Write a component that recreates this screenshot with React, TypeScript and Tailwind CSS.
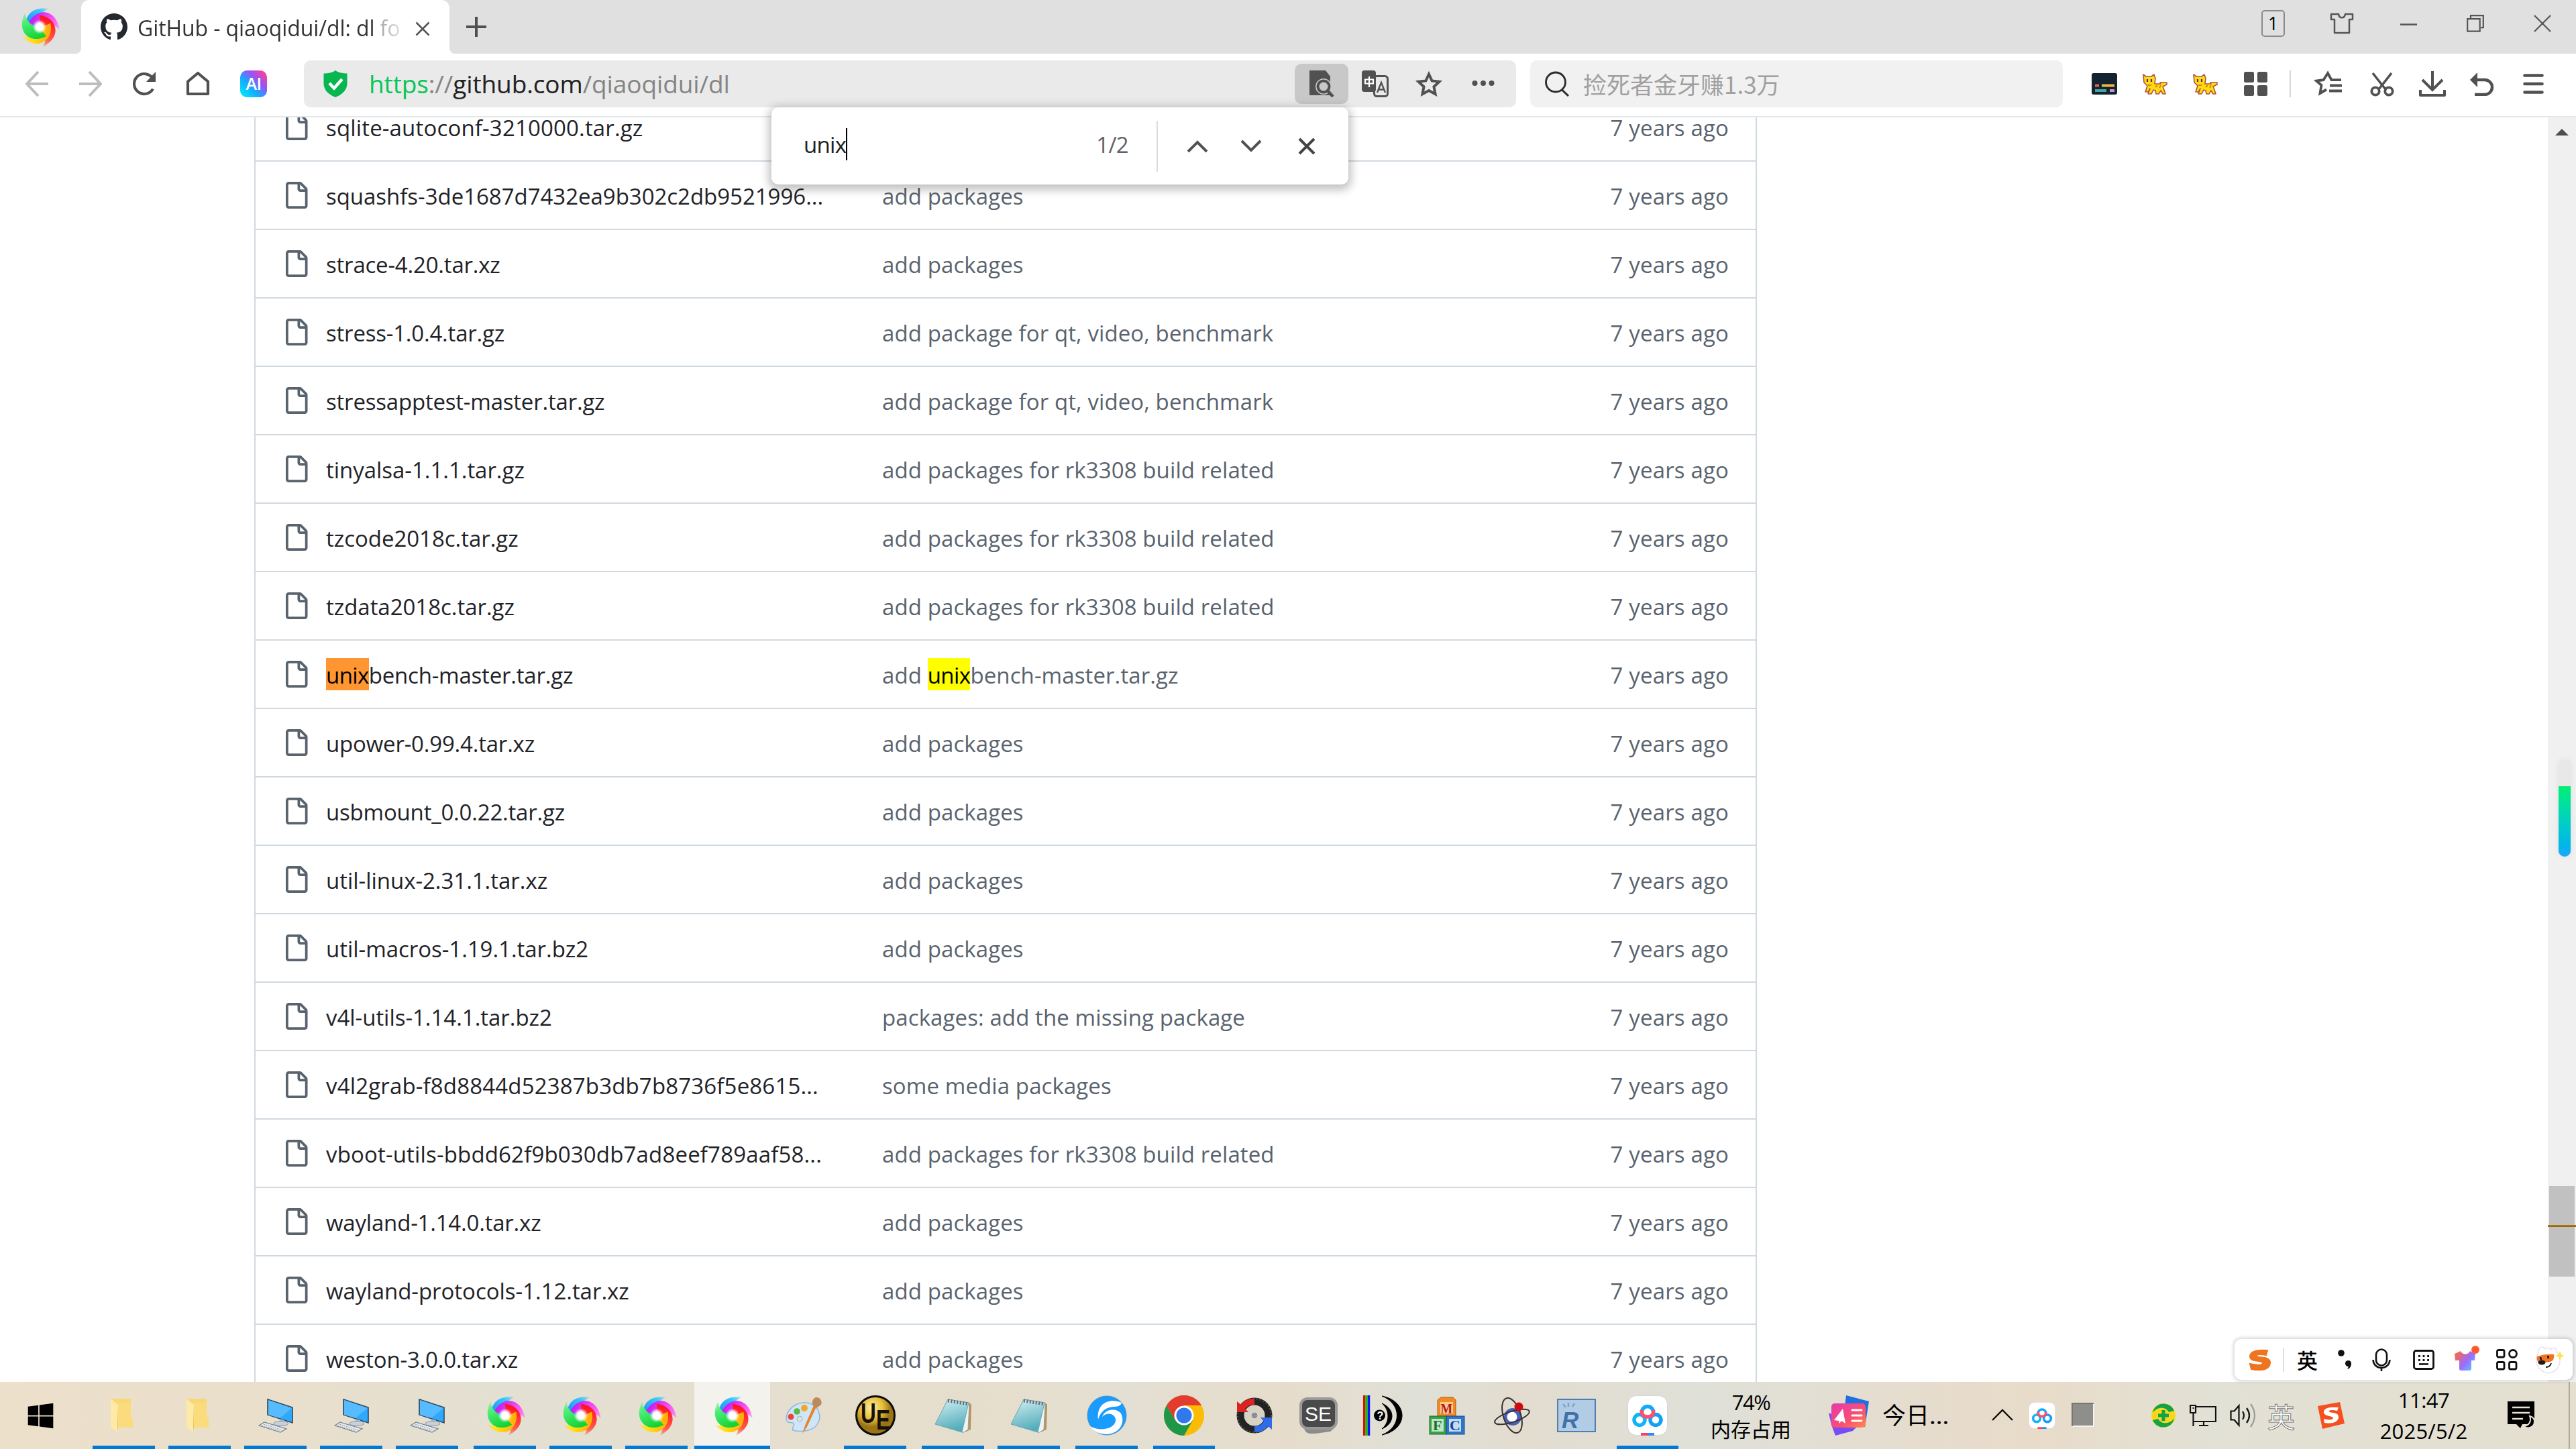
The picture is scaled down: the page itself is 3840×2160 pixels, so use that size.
import type { ReactNode } from "react"
import { FaWindows } from "react-icons/fa"

interface FileRow {
  name: string
  message: string
  tracking?: string
}

interface IconProps {
  w: number
  h: number
  className?: string
  children?: ReactNode
}

const MATCH = "unix"

const TIGHT = "tracking-[-0.2px]"
const LOOSE = "tracking-[0.16px]"

const files: FileRow[] = [
  { name: "sqlite-autoconf-3210000.tar.gz", message: "add packages", tracking: LOOSE },
  { name: "squashfs-3de1687d7432ea9b302c2db9521996...", message: "add packages" },
  { name: "strace-4.20.tar.xz", message: "add packages", tracking: TIGHT },
  { name: "stress-1.0.4.tar.gz", message: "add package for qt, video, benchmark", tracking: TIGHT },
  { name: "stressapptest-master.tar.gz", message: "add package for qt, video, benchmark", tracking: TIGHT },
  { name: "tinyalsa-1.1.1.tar.gz", message: "add packages for rk3308 build related" },
  { name: "tzcode2018c.tar.gz", message: "add packages for rk3308 build related" },
  { name: "tzdata2018c.tar.gz", message: "add packages for rk3308 build related" },
  { name: "unixbench-master.tar.gz", message: "add unixbench-master.tar.gz", tracking: TIGHT },
  { name: "upower-0.99.4.tar.xz", message: "add packages", tracking: TIGHT },
  { name: "usbmount_0.0.22.tar.gz", message: "add packages", tracking: TIGHT },
  { name: "util-linux-2.31.1.tar.xz", message: "add packages" },
  { name: "util-macros-1.19.1.tar.bz2", message: "add packages" },
  { name: "v4l-utils-1.14.1.tar.bz2", message: "packages: add the missing package" },
  { name: "v4l2grab-f8d8844d52387b3db7b8736f5e8615...", message: "some media packages", tracking: LOOSE },
  { name: "vboot-utils-bbdd62f9b030db7ad8eef789aaf58...", message: "add packages for rk3308 build related", tracking: LOOSE },
  { name: "wayland-1.14.0.tar.xz", message: "add packages", tracking: TIGHT },
  { name: "wayland-protocols-1.12.tar.xz", message: "add packages" },
  { name: "weston-3.0.0.tar.xz", message: "add packages", tracking: TIGHT },
]

// viewBox always equals the drawn size, so paths are in page pixels
function Icon({ w, h, className = "", children }: IconProps) {
  return (
    <svg width={w} height={h} viewBox={`0 0 ${w} ${h}`} fill="none" className={`shrink-0 ${className}`}>
      {children}
    </svg>
  )
}

/* ---------- logos ---------- */

function SwirlLogo({ size = 60 }: { size?: number }) {
  const arm = "M20 44C1 27 10 -2 43 3C33 8 27 17 28 30Z"
  const arms = [
    { id: "blue", from: "#1477f5", to: "#35c8ff", turn: 0 },
    { id: "magenta", from: "#b80df0", to: "#ff62ee", turn: 72 },
    { id: "red", from: "#ff0018", to: "#ff5a48", turn: 144 },
    { id: "yellow", from: "#ff9d00", to: "#ffe11a", turn: 216 },
    { id: "green", from: "#00c81e", to: "#4ff07a", turn: 288 },
  ]
  return (
    <svg width={size} height={size} viewBox="0 0 60 60" className="shrink-0">
      <defs>
        {arms.map((a) => (
          <linearGradient key={a.id} id={`sw-${a.id}`} x1="0" y1="1" x2="1" y2="0">
            <stop offset="0" stopColor={a.from} />
            <stop offset="0.75" stopColor={a.to} />
            <stop offset="1" stopColor={a.to} stopOpacity="0.35" />
          </linearGradient>
        ))}
        <radialGradient id="sw-core">
          <stop offset="0.5" stopColor="#fff" />
          <stop offset="1" stopColor="#fff" stopOpacity="0" />
        </radialGradient>
      </defs>
      {arms.map((a) => (
        <path key={a.id} d={arm} fill={`url(#sw-${a.id})`} transform={`rotate(${a.turn} 30 30)`} />
      ))}
      <circle cx="30" cy="30" r="10.500" fill="url(#sw-core)" />
    </svg>
  )
}

function GithubMark() {
  return (
    <svg width="40" height="40" viewBox="0 0 16 16" fill="#24292f" className="shrink-0">
      <path d="M8 0C3.58 0 0 3.58 0 8c0 3.54 2.29 6.53 5.47 7.59.4.07.55-.17.55-.38 0-.19-.01-.82-.01-1.49-2.01.37-2.53-.49-2.69-.94-.09-.23-.48-.94-.82-1.13-.28-.15-.68-.52-.01-.53.63-.01 1.08.58 1.23.82.72 1.21 1.87.87 2.33.66.07-.52.28-.87.51-1.07-1.78-.2-3.64-.89-3.64-3.95 0-.87.31-1.59.82-2.15-.08-.2-.36-1.02.08-2.12 0 0 .67-.21 2.2.82.64-.18 1.32-.27 2-.27s1.36.09 2 .27c1.53-1.04 2.2-.82 2.2-.82.44 1.1.16 1.92.08 2.12.51.56.82 1.27.82 2.15 0 3.07-1.87 3.75-3.65 3.95.29.25.54.73.54 1.48 0 1.07-.01 1.93-.01 2.2 0 .21.15.46.55.38A8.01 8.01 0 0 0 16 8c0-4.42-3.58-8-8-8Z" />
    </svg>
  )
}

function FileIcon() {
  return (
    <svg width="40" height="40" viewBox="0 0 16 16" fill="#59636e" className="shrink-0">
      <path d="M2 1.75C2 .784 2.784 0 3.75 0h6.586c.464 0 .909.184 1.237.513l2.914 2.914c.329.328.513.773.513 1.237v9.586A1.75 1.75 0 0 1 13.25 16h-9.5A1.75 1.75 0 0 1 2 14.25Zm1.75-.25a.25.25 0 0 0-.25.25v12.5c0 .138.112.25.25.25h9.5a.25.25 0 0 0 .25-.25V6h-2.75A1.75 1.75 0 0 1 9 4.25V1.5Zm6.75.062V4.25c0 .138.112.25.25.25h2.688l-.011-.013-2.914-2.914-.013-.011Z" />
    </svg>
  )
}

function BaiduDisk({ size }: { size: number }) {
  return (
    <svg width={size} height={size} viewBox="0 0 60 60" fill="none" className="shrink-0">
      <rect x="0.5" y="0.5" width="59" height="59" rx="13" fill="#fff" stroke="#d5d5d5" />
      <circle cx="18" cy="36.500" r="8" stroke="#12b4f8" strokeWidth="5.500" />
      <circle cx="42" cy="36.500" r="8" stroke="#12a0fa" strokeWidth="5.500" />
      <path d="M21.500 25a8.500 8.500 0 1 1 17 0" stroke="#12aafa" strokeWidth="5.500" />
      <path d="M21.500 22c-1 7 3 10 8.500 10s9.500-3 8.500-10" stroke="#ff4f6b" strokeWidth="5.500" />
      <path d="M20 56h10v4H20z" fill="#ff3f5d" />
      <path d="M30 56h10v4H30z" fill="#2f86ff" />
    </svg>
  )
}

/* ---------- title bar ---------- */

function TitleBar() {
  return (
    <div className="flex h-[80px] w-full shrink-0 bg-white">
      <div className="flex w-[121px] items-center rounded-br-lg bg-[#e0e0e0] pl-[29px]">
        <SwirlLogo />
      </div>
      <div className="w-[549px] bg-[#e0e0e0]">
        <div className="flex h-full items-center rounded-t-xl bg-white pl-[29px]">
          <GithubMark />
          <div className="ml-[15px] w-[392px] overflow-hidden bg-[linear-gradient(90deg,#333_91%,#a8a8a8_92.500%,#e0e0e0_100%)] bg-clip-text pt-[4px] text-[32px] tracking-[-0.1px] whitespace-nowrap text-transparent">
            GitHub - qiaoqidui/dl: dl fo
          </div>
          <Icon w={22} h={22} className="mt-[6px] ml-[22px]">
            <path d="M1.500 1.500l19 19M20.500 1.500l-19 19" stroke="#555" strokeWidth="2.500" />
          </Icon>
        </div>
      </div>
      <div className="flex flex-1 items-start rounded-bl-lg bg-[#e0e0e0]">
        <Icon w={30} h={30} className="mt-[25px] ml-[25px]">
          <path d="M15 0v30M0 15h30" stroke="#4f4f4f" strokeWidth="4" />
        </Icon>
        <div className="mt-[15px] ml-auto flex h-[40px] w-[35px] items-center justify-center rounded-[5px] border-2 border-[#8a8a8a] text-[27px] text-black">
          1
        </div>
        <Icon w={36} h={32} className="mt-[19px] ml-[67px]">
          <path d="M2 2h11c1 7 9 7 10 0h11v8h-5v20H7V10H2z" stroke="#555" strokeWidth="2.500" strokeLinejoin="round" />
        </Icon>
        <Icon w={25} h={3} className="mt-[35px] ml-[69px]">
          <path d="M0 1.500h25" stroke="#555" strokeWidth="2.500" />
        </Icon>
        <Icon w={26} h={26} className="mt-[22px] ml-[74px]">
          <path d="M1.200 6.200h18.500v18.500H1.200zM6 5V1.200h18.800v18H21" stroke="#555" strokeWidth="2.200" />
        </Icon>
        <Icon w={26} h={26} className="mt-[22px] mr-[37px] ml-[74px]">
          <path d="M1 1l24 24M25 1L1 25" stroke="#555" strokeWidth="2.200" />
        </Icon>
      </div>
    </div>
  )
}

/* ---------- toolbar ---------- */

function CatIcon({ className = "" }: { className?: string }) {
  return (
    <Icon w={38} h={32} className={className}>
      <path
        d="M2 2l4 3h8l4-3 2 6-1 8h9l-1-2h10v3l-6 3 2 5 2 6h-4l-3-5-3 5h-4l-1-5-3-1-3 6h-5l3-8-3 5H5l3-9-5-5z"
        fill="#ffdc10"
        stroke="#b0563f"
        strokeWidth="1.600"
        strokeLinejoin="round"
      />
      <path d="M8 9v4M14 9v4" stroke="#5c2c7a" strokeWidth="2.200" />
      <path d="M9 17c2 2 3 2 5 0M20 21l3-3M26 22l2-4" stroke="#e07b1b" strokeWidth="1.800" />
    </Icon>
  )
}

function Toolbar() {
  return (
    <div className="flex h-[95px] w-full shrink-0 items-center border-b-2 border-[#e2e7ec] bg-white pb-[3px]">
      <Icon w={34} h={38} className="ml-[38px]">
        <path d="M19 1L2 19l17 18M2 19h32" stroke="#bdbdbd" strokeWidth="4" />
      </Icon>
      <Icon w={34} h={38} className="ml-[46px]">
        <path d="M15 1l17 18-17 18M32 19H0" stroke="#bdbdbd" strokeWidth="4" />
      </Icon>
      <Icon w={36} h={38} className="ml-[45px]">
        <path d="M31 26.500A15 15 0 1 1 30 10" stroke="#515151" strokeWidth="4.200" />
        <path d="M35 1v15H21z" fill="#515151" />
      </Icon>
      <Icon w={36} h={38} className="ml-[44px]">
        <path d="M3 15.500L18 3l15 12.500V34H3z" stroke="#515151" strokeWidth="4.200" strokeLinejoin="round" />
      </Icon>
      <div className="ml-[45px] flex size-[40px] items-center justify-center rounded-[10px] bg-[linear-gradient(45deg,#00e5ff_8%,#1aa7ff_40%,#9a52f5_65%,#ff4196_92%)] text-[25px] font-semibold tracking-[-0.5px] text-white">
        AI
      </div>

      {/* Address bar */}
      <div className="ml-[55px] flex h-[70px] w-[1807px] items-center rounded-[10px] bg-[#eaeaea] pl-[29px]">
        <Icon w={36} h={40}>
          <path d="M18 0c5 3.500 11 4.500 17.500 4.500V19c0 11-8 17-17.500 21C8.500 36 .5 30 .5 19V4.500C7 4.500 13 3.500 18 0z" fill="#06b64f" />
          <path d="M9 19l7 7.500L28 13" stroke="#fff" strokeWidth="4.500" />
        </Icon>
        <div className="ml-[32px] text-[37px] tracking-[-0.12px] whitespace-nowrap text-[#858585]">
          <span className="text-[#06c755]">https</span>://<span className="text-[#222]">github.com</span>/qiaoqidui/dl
        </div>
        <div className="ml-auto flex h-[60px] w-[80px] items-center justify-center rounded-[10px] bg-[#c8c8c8]">
          <Icon w={38} h={40}>
            <path d="M1 0h24l7 9v28H1z" fill="#515151" />
            <circle cx="22" cy="24" r="9" fill="#c8c8c8" stroke="#c8c8c8" strokeWidth="6" />
            <circle cx="22" cy="24" r="8.500" stroke="#515151" strokeWidth="4" />
            <path d="M28 30l8 9" stroke="#515151" strokeWidth="4.500" />
          </Icon>
        </div>
        <Icon w={40} h={40} className="ml-5">
          <rect x="18.500" y="8.500" width="20" height="30" rx="4" fill="#eaeaea" stroke="#515151" strokeWidth="3" />
          <rect x="0" y="0" width="21" height="32" rx="4" fill="#515151" />
          <path d="M5 13.500h12v6H5zM11 9v16" stroke="#fff" strokeWidth="2.200" />
          <path d="M23 33l6-15 6 15M25 28.500h8" stroke="#515151" strokeWidth="2.400" />
        </Icon>
        <Icon w={40} h={40} className="ml-10">
          <path d="M20 5.500l4.600 10 10.900 1.300-8 7.500 2.100 11L20 30l-9.600 5.300 2.100-11-8-7.500 10.900-1.300z" stroke="#515151" strokeWidth="4" />
        </Icon>
        <Icon w={34} h={10} className="mr-8 ml-[44px]">
          <circle cx="4.500" cy="4" r="4" fill="#515151" />
          <circle cx="17" cy="4" r="4" fill="#515151" />
          <circle cx="29.500" cy="4" r="4" fill="#515151" />
        </Icon>
      </div>

      {/* Search box */}
      <div className="ml-[21px] flex h-[70px] w-[794px] items-center rounded-[10px] bg-[#f1f1f1] pl-[22px]">
        <Icon w={37} h={38}>
          <circle cx="16" cy="16.500" r="14.500" stroke="#2b2b2b" strokeWidth="2.800" />
          <path d="M25.500 28l9.500 9" stroke="#2b2b2b" strokeWidth="3" />
        </Icon>
        <div className="ml-[20px] font-['Noto_Sans_CJK_SC',sans-serif] text-[35px] text-[#a0a0a0]">捡死者金牙赚1.3万</div>
      </div>

      <Icon w={38} h={32} className="ml-[43px]">
        <rect width="38" height="32" rx="3" fill="#13232f" />
        <path d="M5 18.500h6" stroke="#e85a5a" strokeWidth="4" />
        <path d="M15 18.500h19" stroke="#f0b83c" strokeWidth="4" />
        <path d="M5 26h17" stroke="#45a5a5" strokeWidth="4" />
        <path d="M27 26h7" stroke="#c98fd6" strokeWidth="4" />
      </Icon>
      <CatIcon className="ml-[37px]" />
      <CatIcon className="ml-[37px]" />
      <Icon w={35} h={36} className="ml-[39px]">
        <rect width="15" height="16" rx="2.500" fill="#515151" />
        <rect x="20" width="15" height="16" rx="2.500" fill="#515151" />
        <rect y="20" width="15" height="16" rx="2.500" fill="#515151" />
        <rect x="20" y="20" width="15" height="16" rx="2.500" fill="#515151" />
      </Icon>
      <div className="ml-[33px] h-[40px] w-[2px] bg-[#d6d6d6]" />
      <Icon w={42} h={40} className="ml-[35px]">
        <path d="M18 28.500L8.500 34l2-12L3 15.500l10.500-1.300L20 4l5.500 10.200H40" stroke="#515151" strokeWidth="3.800" />
        <path d="M23 22.500h18M22 30.500h19" stroke="#515151" strokeWidth="3.800" />
      </Icon>
      <Icon w={36} h={38} className="ml-[41px]">
        <path d="M4 3l19 24M32 3L13 27" stroke="#515151" strokeWidth="3.600" />
        <circle cx="8" cy="30" r="5.700" stroke="#515151" strokeWidth="3.800" />
        <circle cx="28" cy="30" r="5.700" stroke="#515151" strokeWidth="3.800" />
      </Icon>
      <Icon w={40} h={38} className="ml-[37px]">
        <path d="M20 0v28M5 13l15 15 15-15" stroke="#515151" strokeWidth="4" />
        <path d="M2 28v8h36v-8" stroke="#515151" strokeWidth="4" strokeLinejoin="round" />
      </Icon>
      <Icon w={38} h={36} className="ml-[36px]">
        <path d="M0 12L11 1v22z" fill="#515151" />
        <path d="M9 12h13a11 11 0 0 1 0 22H7" stroke="#515151" strokeWidth="4.400" />
      </Icon>
      <Icon w={32} h={32} className="ml-[41px]">
        <path d="M2.500 3.500h26M2.500 16h26M2.500 28.500h26" stroke="#515151" strokeWidth="4.600" strokeLinecap="round" />
      </Icon>
    </div>
  )
}

function FindBar() {
  return (
    <div className="absolute top-[160px] left-[1150px] flex h-[115px] w-[860px] items-center rounded-[10px] bg-white shadow-[0_4px_14px_4px_rgba(0,0,0,0.25)]">
      <div className="-mt-[3px] ml-[48px] text-[33px] tracking-[-0.7px] text-[#202124]">unix</div>
      <div className="-mt-[6px] h-[48px] w-[2px] bg-black" />
      <div className="-mt-[3px] mr-[42px] ml-auto text-[33px] tracking-[-0.7px] text-[#5f6368]">1/2</div>
      <div className="h-[76px] w-[2px] bg-[#dadce0]" />
      <Icon w={32} h={20} className="ml-[43px]">
        <path d="M2 18L16 4l14 14" stroke="#515151" strokeWidth="4" />
      </Icon>
      <Icon w={32} h={20} className="ml-[48px]">
        <path d="M2 2l14 14L30 2" stroke="#515151" strokeWidth="4" />
      </Icon>
      <Icon w={26} h={26} className="mr-[49px] ml-[54px]">
        <path d="M2 2l22 22M24 2L2 24" stroke="#444" strokeWidth="4" />
      </Icon>
    </div>
  )
}

/* ---------- page ---------- */

function Highlight({ text, active }: { text: string; active?: boolean }) {
  const at = text.indexOf(MATCH)
  if (at < 0) return <>{text}</>
  return (
    <>
      {text.slice(0, at)}
      <span className={`pt-[3px] tracking-[-0.6px] text-black ${active ? "bg-[#ff9632]" : "bg-[#ffff00]"}`}>{MATCH}</span>
      {text.slice(at + MATCH.length)}
    </>
  )
}

function FileTable() {
  return (
    <div className="ml-[379px] w-[2240px] overflow-hidden border-x-2 border-[#d1d9e0]">
      <div className="-mt-[36px]">
        {files.map((file) => (
          <div
            key={file.name}
            className="flex h-[102px] items-center border-b-2 border-[#d1d9e0] pr-[40px] pl-[40px] text-[33px] whitespace-nowrap text-[#59636e]"
          >
            <FileIcon />
            <div className={`ml-[25px] w-[829px] pt-[4px] text-[#1f2328] ${file.tracking ?? "tracking-[-0.03px]"}`}>
              <Highlight text={file.name} active />
            </div>
            <div className="flex-1 pt-[4px] tracking-[0.1px]">
              <Highlight text={file.message} />
            </div>
            <div className="pt-[4px] tracking-[0.15px]">7 years ago</div>
          </div>
        ))}
      </div>
    </div>
  )
}

function ScrollBar() {
  return (
    <div className="relative ml-auto w-[42px] bg-[#f0f0f0]">
      <Icon w={20} h={10} className="mt-[17px] ml-[11px]">
        <path d="M0 10L10 0l10 10z" fill="#4f4f4f" />
      </Icon>
      <div className="absolute top-[1593px] left-[2px] h-[135px] w-[38px] bg-[#c1c1c1]" />
      <div className="absolute top-[1651px] left-0 h-[3px] w-full border-y border-[#8a5a10] bg-[#f0a800]" />
      {/* Memory gauge */}
      <div className="absolute top-[957px] left-[16px] h-[145px] w-[18px] overflow-hidden rounded-full bg-[#e8e8e8] shadow-[0_0_8px_rgba(0,0,0,0.08)]">
        <div className="mt-[40px] h-[105px] bg-gradient-to-b from-[#05f070] to-[#19a8fb]" />
      </div>
    </div>
  )
}

/* ---------- input method bar ---------- */

function ImeBar() {
  return (
    <div className="absolute top-[1996px] left-[3331px] flex h-[61px] w-[504px] items-center rounded-[10px] bg-white shadow-[0_0_5px_2px_rgba(0,0,0,0.16)]">
      <Icon w={36} h={32} className="ml-[18px]">
        <path d="M31 2C20 1 5 2 5 11c0 9 19 5 19 10 0 4-10 3-19 1l2 8c14 3 28 1 28-10 0-10-20-6-20-10 0-3 8-2 14-1z" fill="#ee7420" stroke="#ee7420" strokeWidth="2" />
      </Icon>
      <div className="ml-[19px] h-[36px] w-px bg-[#bbb]" />
      <div className="ml-[19px] font-['Noto_Sans_CJK_SC',sans-serif] text-[31px] leading-[40px] font-medium text-black">英</div>
      <Icon w={22} h={30} className="ml-[30px]">
        <circle cx="5" cy="5" r="4.800" fill="#111" />
        <circle cx="15.500" cy="20.500" r="4.500" fill="#111" />
        <path d="M20 20c0 5-2 8-6 9 2-3 2-5 1-8z" fill="#111" />
      </Icon>
      <Icon w={28} h={34} className="ml-[29px]">
        <rect x="6" y="1.500" width="16" height="24" rx="8" stroke="#111" strokeWidth="2.600" />
        <path d="M1.500 17c1 16 24 16 25 0M14 28v6" stroke="#111" strokeWidth="2.600" />
      </Icon>
      <Icon w={32} h={30} className="ml-[33px]">
        <rect x="1.500" y="1.500" width="29" height="27" rx="3" stroke="#111" strokeWidth="2.800" />
        <path d="M8 9.500h16M8 15.500h16" stroke="#111" strokeWidth="2.800" strokeDasharray="2.800 3.800" />
        <path d="M9 21.500h14" stroke="#111" strokeWidth="2.600" />
      </Icon>
      <Icon w={38} h={38} className="-mt-[4px] ml-[30px]">
        <defs>
          <linearGradient id="shirt" x1="0" y1="0.200" x2="1" y2="1">
            <stop offset="0" stopColor="#ff6a3c" />
            <stop offset="0.500" stopColor="#9a6bff" />
            <stop offset="1" stopColor="#55d6ff" />
          </linearGradient>
        </defs>
        <path d="M0 12l9-4c3 6 11 6 14 0l8 4-1 10h-5v12q0 3-3 3H10q-3 0-3-3V22H1z" fill="url(#shirt)" />
        <circle cx="31" cy="6" r="6" fill="#ff5b33" />
      </Icon>
      <Icon w={32} h={32} className="ml-[24px]">
        <rect x="1.500" y="1.500" width="10.500" height="10.500" rx="2" stroke="#111" strokeWidth="2.800" />
        <circle cx="25" cy="7" r="5.500" stroke="#111" strokeWidth="2.800" />
        <rect x="1.500" y="19.500" width="10.500" height="10.500" rx="2" stroke="#111" strokeWidth="2.800" />
        <rect x="19.500" y="19.500" width="10.500" height="10.500" rx="2" stroke="#111" strokeWidth="2.800" />
      </Icon>
      <Icon w={43} h={42} className="ml-[26px]">
        <path d="M5 9c1-8 7-9 10-4 4-3 7-2 8 1 4-5 9-3 10 4 8 12 4 28-13 31C3 38-2 24 5 9z" fill="#fff" stroke="#eadff0" strokeWidth="1.500" />
        <path d="M3 16c8-3 17-4 25-3 1 6-1 10-6 11-7 1-12 2-18 0-1-3-2-5-1-8z" fill="#ee7420" />
        <path d="M8 17l1 4M19 15l1 4" stroke="#111" strokeWidth="2.500" />
        <ellipse cx="10" cy="25" rx="5.500" ry="3.500" fill="#1c1c1c" />
        <path d="M16 32c4 0 7-2 8-6" stroke="#111" strokeWidth="1.800" />
        <path d="M37 8l2 5 4 2-4 2-2 5-2-5-4-2 4-2z" fill="#ffe04a" />
      </Icon>
    </div>
  )
}

/* ---------- task bar ---------- */

function FolderIcon() {
  return (
    <Icon w={36} h={52} className="mr-[5px]">
      <path d="M1 1h30v27l3 4v12H12z" fill="#f8d775" />
      <path d="M12 8h19v20l3 4v12H12z" fill="#fbdc7c" />
      <path d="M1 1l11 9v41L1 43z" fill="#ffe9a6" />
      <path d="M12 10v34l-1 7V43" fill="#e7bf58" />
    </Icon>
  )
}

function ComputerIcon() {
  return (
    <Icon w={52} h={52}>
      <path d="M14 2l37 12v23L14 25z" fill="#2fa9ff" stroke="#33475a" strokeWidth="1.600" />
      <path d="M15 3l35 12-18 15-17-5z" fill="#57bcff" />
      <path d="M31 31l8 2v5h-6z" fill="#aab6c2" />
      <ellipse cx="34" cy="38" rx="11" ry="3.500" fill="#c8d0d8" stroke="#8896a3" />
      <path d="M1 41l8-5 33 10-9 5z" fill="#e3e7ea" stroke="#78848f" strokeWidth="1.200" />
      <path d="M5 41l27 8M8 39l28 9" stroke="#98a2ac" strokeDasharray="2 1.500" />
    </Icon>
  )
}

function PaintIcon() {
  return (
    <Icon w={56} h={56}>
      <path d="M2 30C6 14 22 6 37 10c14 4 18 20 12 30C44 50 26 54 12 50c-3-4 4-7 1-10-3-4-11 3-11-10z" fill="#cfe6f8" stroke="#8fb8d8" strokeWidth="1.500" />
      <circle cx="9" cy="30" r="4.500" fill="#e8443a" />
      <circle cx="18" cy="22" r="4.800" fill="#59b84a" />
      <circle cx="29" cy="17" r="5" fill="#f6a623" />
      <circle cx="22" cy="33" r="4" fill="#e6e0d2" stroke="#8fb8d8" />
      <path d="M26 55l4-12 13-30 4 2-14 30z" fill="#e8832a" />
      <path d="M42 13c-3-6 1-12 5-12 6 0 9 6 7 11l-7 5z" fill="#b98a5c" />
    </Icon>
  )
}

function UltraEditIcon() {
  return (
    <Icon w={60} h={60}>
      <defs>
        <radialGradient id="ue" cx="0.400" cy="0.300">
          <stop offset="0" stopColor="#fff0a0" />
          <stop offset="0.600" stopColor="#e6bd38" />
          <stop offset="1" stopColor="#9a7414" />
        </radialGradient>
      </defs>
      <circle cx="30" cy="30" r="28.500" fill="url(#ue)" stroke="#0c0c0c" strokeWidth="3" />
      <g fontSize="42" fontWeight="900" fontFamily="Liberation Sans, sans-serif" fill="#161208">
        <text transform="translate(8 41) scale(0.75 1)">U</text>
        <text transform="translate(31 51) scale(0.75 1)">E</text>
      </g>
    </Icon>
  )
}

function NotepadIcon() {
  return (
    <Icon w={56} h={54}>
      <defs>
        <linearGradient id="pad" x1="0" y1="0" x2="0.300" y2="1">
          <stop offset="0" stopColor="#d5f0f4" />
          <stop offset="1" stopColor="#55aebb" />
        </linearGradient>
      </defs>
      <path d="M50 8l5 2-1 38-9 4z" fill="#b8935c" />
      <path d="M20 3l32 5-2 40-8 5z" fill="#eef4f5" stroke="#98a5a8" />
      <path d="M20 3l31 5L41 52 1 40z" fill="url(#pad)" stroke="#6aa5ae" />
      <path d="M20 5l31 5" stroke="#667" strokeWidth="5" strokeDasharray="2 2.500" />
    </Icon>
  )
}

function BlueSwirlIcon() {
  return (
    <Icon w={60} h={60}>
      <circle cx="30" cy="30" r="29" fill="#1a9cff" stroke="#4a90c8" />
      <path d="M52 11C36 4 14 10 17 36c3-11 11-18 22-19 6 0 12-1 13-6z" fill="#fff" />
      <path d="M23 32c5-13 22-13 28-5 7 14-2 30-21 31-12 0-21-5-25-12 13 8 36 5 38-8 1-9-11-15-20-6z" fill="#fff" />
    </Icon>
  )
}

function ChromeIcon() {
  return (
    <Icon w={60} h={60}>
      <circle cx="30" cy="30" r="30" fill="#fbbc05" />
      <path d="M4 15a30 30 0 0 0 26 45l13-22.500L30 30 17 37.500z" fill="#1e9748" />
      <path d="M4 15l13 22.500L30 30V15h26A30 30 0 0 0 4 15z" fill="#e33b2e" />
      <circle cx="30" cy="30" r="14.500" fill="#fff" />
      <circle cx="30" cy="30" r="11.500" fill="#3079ec" />
    </Icon>
  )
}

function TireIcon() {
  return (
    <Icon w={54} h={56}>
      <circle cx="27" cy="28" r="21" stroke="#222" strokeWidth="11" />
      <circle cx="27" cy="28" r="25" stroke="#555" strokeWidth="2" strokeDasharray="2 3" />
      <circle cx="27" cy="28" r="15" fill="#d8d2c4" />
      <path d="M27 3C17 3 11 6 7 12L1 7v16h17l-5-5c4-4 8-6 14-6z" fill="#dd2222" />
      <path d="M27 53c10 0 16-3 20-9l6 5V31H36l5 6c-4 5-8 7-14 7z" fill="#2f6ce8" />
      <circle cx="27" cy="28" r="5" fill="#8f8f8f" stroke="#ddd" />
    </Icon>
  )
}

function SeIcon() {
  return (
    <Icon w={60} h={56}>
      <path d="M8 46h46l-7 6-22 3h-9q-7-1-8-9z" fill="#8b8b8b" />
      <rect x="3" y="3" width="53" height="44" rx="10" fill="#4a4a4a" stroke="#999" strokeWidth="4" />
      <text x="9" y="36" fontSize="30" fontFamily="Liberation Sans, sans-serif" fill="#fff">
        SE
      </text>
    </Icon>
  )
}

function SignalIcon() {
  return (
    <Icon w={60} h={60}>
      <path d="M1.500 0v60" stroke="#f00" strokeWidth="4" />
      <path d="M5 0v60" stroke="#0c0" strokeWidth="3.500" />
      <path d="M8.500 0v60" stroke="#11f" strokeWidth="3.500" />
      <circle cx="24.500" cy="30" r="8.500" fill="#000" />
      <text x="20.500" y="36" fontSize="16" fontWeight="700" fontFamily="Liberation Sans, sans-serif" fill="#fff">
        ?
      </text>
      <path d="M28 12c20 8 20 30 0 38 12-10 12-28 0-38z" fill="#000" stroke="#000" />
      <path d="M28 1c40 8 40 50 0 58 30-12 30-46 0-58z" fill="#000" stroke="#000" />
    </Icon>
  )
}

function MfcIcon() {
  return (
    <Icon w={54} h={58}>
      <path d="M13 6l5-4h18l4 4v24H13z" fill="#f08a24" stroke="#b35a0c" />
      <rect x="1" y="30" width="25" height="27" fill="#35a34a" stroke="#1e6b2e" />
      <rect x="26" y="30" width="27" height="27" fill="#2f74c8" stroke="#1b4a86" />
      <path d="M17 9h19v18H17z" fill="#ffc98a" />
      <path d="M4 34h18v19H4z" fill="#bfe6c6" />
      <path d="M30 34h18v19H30z" fill="#c3dcf5" />
      <g fontSize="22" fontWeight="700" fontFamily="Liberation Serif, serif">
        <text transform="translate(17.500 25.500) scale(0.850 1)" fill="#b01818">
          M
        </text>
        <text x="6" y="51" fill="#1d6b2c">
          F
        </text>
        <text x="31" y="51" fill="#1b3f9c">
          C
        </text>
      </g>
    </Icon>
  )
}

function AtomIcon() {
  return (
    <Icon w={56} h={56}>
      <circle cx="29" cy="30" r="13" fill="#4d5fb5" />
      <circle cx="28" cy="30" r="7.500" fill="#fff" />
      <g stroke="#333" strokeWidth="2">
        <ellipse cx="28" cy="28" rx="13" ry="27" transform="rotate(-18 28 28)" />
        <ellipse cx="28" cy="30" rx="27" ry="8" transform="rotate(-18 28 30)" />
      </g>
      <circle cx="38" cy="15" r="6.500" fill="#cf0a0a" />
    </Icon>
  )
}

function RIcon() {
  return (
    <Icon w={58} h={50}>
      <rect x="1" y="1" width="56" height="48" fill="#b3cce6" stroke="#4f7fae" strokeWidth="2" />
      <path d="M9 8l4 5M17 6v6M26 7l-3 5" stroke="#7ba3cc" strokeWidth="2.500" />
      <text x="7" y="44" fontSize="35" fontWeight="700" fontStyle="italic" fontFamily="Liberation Sans, sans-serif" fill="#3e73a8">
        R
      </text>
    </Icon>
  )
}

function NewsIcon() {
  return (
    <Icon w={60} h={60}>
      <defs>
        <linearGradient id="news" x1="0" y1="0" x2="1" y2="1">
          <stop offset="0" stopColor="#e23bb0" />
          <stop offset="0.600" stopColor="#fb4f72" />
          <stop offset="1" stopColor="#ff8a4a" />
        </linearGradient>
      </defs>
      <path d="M26 0l34 9-6 38H20z" fill="#1e6fe0" />
      <path d="M0 26l4 18 6 16 26-7 6-6z" fill="#7a4bf5" />
      <rect x="4" y="12" width="51" height="36" rx="5" fill="url(#news)" />
      <path d="M8 37l13-17 4 22-6-4-3 4-1-4z" fill="#fff" />
      <path d="M35 22h14M35 30h14M35 38h14" stroke="#fff" strokeWidth="3" strokeLinecap="round" />
    </Icon>
  )
}

interface Task {
  slot: string
  icon: ReactNode
  bar?: string
}

const tasks: Task[] = [
  { slot: "ml-[7px] w-[113px]", icon: <FolderIcon />, bar: "w-[93px]" },
  { slot: "w-[113px]", icon: <FolderIcon />, bar: "w-[93px]" },
  { slot: "w-[113px]", icon: <ComputerIcon />, bar: "w-[93px]" },
  { slot: "w-[113px]", icon: <ComputerIcon />, bar: "w-[93px]" },
  { slot: "w-[113px]", icon: <ComputerIcon />, bar: "w-[93px]" },
  { slot: "ml-[3px] w-[113px]", icon: <SwirlLogo />, bar: "w-[93px]" },
  { slot: "w-[113px]", icon: <SwirlLogo />, bar: "w-[93px]" },
  { slot: "w-[113px]", icon: <SwirlLogo />, bar: "w-[93px]" },
  { slot: "w-[113px] bg-[#f4f2ec]", icon: <SwirlLogo />, bar: "w-[113px]" },
  { slot: "w-[99px]", icon: <PaintIcon /> },
  { slot: "w-[115px]", icon: <UltraEditIcon />, bar: "w-[93px]" },
  { slot: "ml-[2px] w-[113px]", icon: <NotepadIcon />, bar: "w-[93px]" },
  { slot: "w-[113px]", icon: <NotepadIcon />, bar: "w-[93px]" },
  { slot: "ml-[3px] w-[113px]", icon: <BlueSwirlIcon />, bar: "w-[93px]" },
  { slot: "w-[118px]", icon: <ChromeIcon />, bar: "w-[92px]" },
  { slot: "w-[92px]", icon: <TireIcon /> },
  { slot: "w-[100px]", icon: <SeIcon /> },
  { slot: "w-[92px]", icon: <SignalIcon /> },
  { slot: "w-[98px]", icon: <MfcIcon /> },
  { slot: "w-[95px]", icon: <AtomIcon /> },
  { slot: "w-[97px]", icon: <RIcon /> },
  { slot: "w-[116px]", icon: <BaiduDisk size={60} />, bar: "w-[92px]" },
]

function TaskBar() {
  return (
    <div className="flex h-[100px] w-full shrink-0 items-center bg-[linear-gradient(90deg,#ece0cb_0%,#eadfcb_10%,#e3e0d3_20%,#e5dfd0_27%,#e6decc_38%,#e3dfd2_44%,#e6dccb_50%,#dfe0d7_55%,#e3dccf_59%,#dfe0d8_66%,#e6dccd_75%,#e8dbc9_79%,#e2e1d5_86%,#e4dfcf_100%)] text-black">
      <div className="flex w-[121px] justify-center">
        <FaWindows size={43} />
      </div>
      {tasks.map((task, i) => (
        <div key={i} className={`flex h-full shrink-0 flex-col items-center ${task.slot}`}>
          <div className="flex h-[95px] items-center pt-[5px]">{task.icon}</div>
          {task.bar && <div className={`h-[5px] bg-[#0078d7] ${task.bar}`} />}
        </div>
      ))}

      <div className="-mt-[3px] flex w-[192px] flex-col items-center text-[31px] leading-[42px]">
        <div className="tracking-[-1.500px]">74%</div>
        <div className="font-['Noto_Sans_CJK_SC',sans-serif] text-[30px] leading-[37px]">内存占用</div>
      </div>
      <div className="ml-[20px] flex w-[177px] items-center gap-[20px] font-['Noto_Sans_CJK_SC',sans-serif] text-[35px]">
        <NewsIcon />
        <span className="-mt-[3px] whitespace-nowrap">今日...</span>
      </div>

      {/* Tray */}
      <Icon w={32} h={18} className="-mt-[3px] ml-[66px]">
        <path d="M1 17L16 2l15 15" stroke="#111" strokeWidth="2.400" />
      </Icon>
      <div className="ml-[23px]">
        <BaiduDisk size={40} />
      </div>
      <Icon w={34} h={36} className="-mt-[3px] ml-[24px]">
        <rect x="1" y="1" width="32" height="34" fill="#8e8e8a" stroke="#f2f2ee" strokeWidth="2" />
        <path d="M1 35V1h32" stroke="#77776f" strokeWidth="2" />
      </Icon>
      <Icon w={38} h={38} className="ml-[84px]">
        <circle cx="19" cy="19" r="18" fill="#f9d71c" />
        <path d="M3 15C6-2 29-3 35 12l-8 2C22 5 9 6 3 15zM35 23C32 40 9 41 3 26l8-2c5 9 18 8 24-1z" fill="#12a34a" />
        <path d="M19 11v16M11 19h16" stroke="#12a34a" strokeWidth="5" />
      </Icon>
      <Icon w={40} h={34} className="ml-[20px]">
        <path d="M9 4h30v22H5.500V14M1 2h8v11H1zM4.500 6h2M21 26v6M14 32h14M5.500 26v7" stroke="#111" strokeWidth="2.200" />
      </Icon>
      <Icon w={40} h={38} className="ml-[20px]">
        <path d="M1.500 12.500h5l7-8v29l-7-8h-5z" stroke="#111" strokeWidth="2.200" />
        <path d="M19 13q4 6 0 12M25 8q8 11 0 22" stroke="#111" strokeWidth="2.200" />
        <path d="M31 2q12 17 0 34" stroke="#9b9b94" strokeWidth="2.200" />
      </Icon>
      <div className="ml-[16px] font-['Noto_Sans_CJK_SC',sans-serif] text-[41px] leading-[50px] text-white [-webkit-text-stroke:1px_#777]">英</div>
      <Icon w={42} h={40} className="ml-[33px]">
        <path d="M1 6l33-6 7 32-33 8z" fill="#f4511e" />
        <path d="M32 8C22 7 10 8 10 15c0 7 14 5 14 9 0 3-8 3-14 1l1 6c12 2 21-1 21-9s-14-5-14-8 7-2 12-1z" fill="#fff" />
      </Icon>
      <div className="ml-[37px] flex w-[160px] flex-col items-center text-[31px] leading-[46px]">
        <div className="tracking-[-0.500px]">11:47</div>
        <div className="tracking-[0.200px]">2025/5/2</div>
      </div>
      <Icon w={42} h={42} className="ml-[45px]">
        <path d="M0 0h40v34H22l-3 6-6-6H0z" fill="#000" />
        <path d="M7 9h26M7 17h26M7 26h16" stroke="#e6e1d2" strokeWidth="2.500" />
        <path d="M33 22c3 8-1 14-9 15 6 5 16 2 16-7 0-4-3-7-7-8z" fill="#000" stroke="#e6e1d2" strokeWidth="2" />
      </Icon>
      <div className="mr-[9px] ml-auto h-full w-[2px] bg-[#aaa99e]" />
    </div>
  )
}

export default function App() {
  return (
    <div className="relative flex h-[2160px] w-[3840px] flex-col overflow-hidden bg-white font-['Open_Sans','Noto_Sans_CJK_SC',sans-serif]">
      <TitleBar />
      <Toolbar />
      <div className="flex min-h-0 flex-1">
        <FileTable />
        <ScrollBar />
      </div>
      <TaskBar />
      <FindBar />
      <ImeBar />
    </div>
  )
}
